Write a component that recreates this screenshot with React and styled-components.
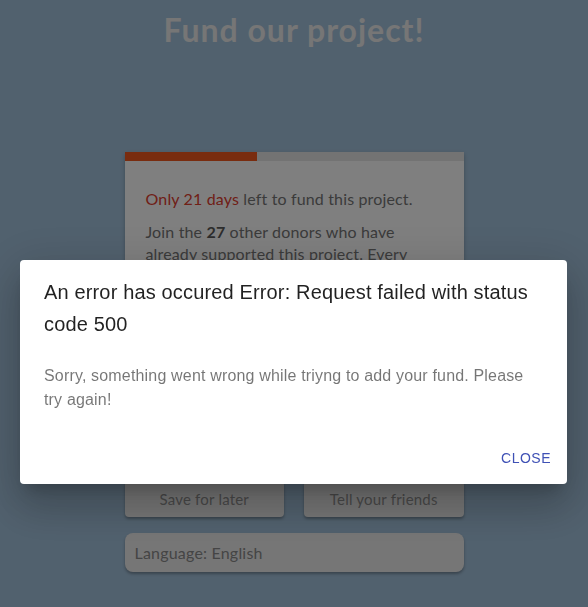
import React from "react";
import styled, { createGlobalStyle } from "styled-components";

const GlobalStyle = createGlobalStyle`
  html, body {
    margin: 0;
    padding: 0;
    background: #a3c2dc;
    height: 100%;
    overflow: hidden;
  }
`;

const Page = styled.div`
  display: flex;
  flex-direction: column;
  align-items: center;
  min-height: 607px;
  font-family: Lato, "Open Sans", sans-serif;
`;

const Title = styled.h1`
  margin: 9px 0 0;
  font-size: 32px;
  line-height: 42px;
  font-weight: 700;
  letter-spacing: 1px;
  color: #ececec;
`;

const Card = styled.div`
  margin-top: 101px;
  width: 339px;
  height: 313px;
  background: #fff;
  box-shadow: 0 2px 4px rgba(0, 0, 0, 0.25);
  overflow: hidden;
`;

const Progress = styled.div`
  height: 9px;
  background: #e6e6e6;
`;

const ProgressFill = styled.div`
  height: 100%;
  background: #f2581f;
`;

const CardBody = styled.div`
  padding: 27px 21px 20px;
  color: #767676;
  font-size: 16px;
  line-height: 22px;
  letter-spacing: 0.15px;
`;

const Para = styled.p`
  margin: 0 0 11px;
`;

const Highlight = styled.span`
  color: #e0402f;
`;

const Strong = styled.strong`
  color: #5a5a5a;
`;

const GiveRow = styled.div`
  display: flex;
  gap: 10px;
  margin-top: 20px;
`;

const AmountInput = styled.div`
  flex: 1;
  height: 40px;
  border: 1px solid #ccc;
  border-radius: 4px;
  padding: 0 10px;
  display: flex;
  align-items: center;
  color: #555;
`;

const GiveButton = styled.div`
  width: 110px;
  height: 42px;
  border-radius: 4px;
  background: #20b573;
  color: #fff;
  display: flex;
  align-items: center;
  justify-content: center;
  font-weight: 700;
`;

const ButtonRow = styled.div`
  display: flex;
  gap: 20px;
  width: 339px;
  margin-top: 16px;
`;

const SoftButton = styled.div`
  flex: 1;
  height: 36px;
  border-radius: 4px;
  background: #ededed;
  box-shadow: 0 2px 3px rgba(0, 0, 0, 0.3);
  display: flex;
  align-items: center;
  justify-content: center;
  color: #929292;
  font-size: 15px;
  letter-spacing: 0.2px;
`;

const LanguageSelect = styled.div`
  width: 339px;
  height: 39px;
  margin-top: 16px;
  box-sizing: border-box;
  border-radius: 8px;
  background: #ededed;
  box-shadow: 0 2px 3px rgba(0, 0, 0, 0.3);
  display: flex;
  align-items: center;
  padding-left: 10px;
  color: #8a8a8a;
  font-size: 16px;
  letter-spacing: 0.2px;
`;

const Backdrop = styled.div`
  position: fixed;
  inset: 0;
  background: rgba(0, 0, 0, 0.5);
`;

const Dialog = styled.div`
  position: absolute;
  top: 260px;
  left: 20px;
  right: 21px;
  background: #fff;
  border-radius: 4px;
  box-shadow: 0 11px 15px -7px rgba(0, 0, 0, 0.2),
    0 24px 38px 3px rgba(0, 0, 0, 0.14), 0 9px 46px 8px rgba(0, 0, 0, 0.12);
  font-family: "Liberation Sans", Arial, sans-serif;
  display: flex;
  flex-direction: column;
`;

const DialogTitle = styled.h2`
  margin: 0;
  padding: 16px 24px;
  font-size: 20px;
  line-height: 32px;
  font-weight: 400;
  letter-spacing: 0.15px;
  color: rgba(0, 0, 0, 0.87);
`;

const DialogContent = styled.div`
  padding: 8px 24px;
`;

const DialogText = styled.p`
  margin: 0 0 12px;
  font-size: 16px;
  line-height: 24px;
  letter-spacing: 0.17px;
  color: rgba(0, 0, 0, 0.54);
`;

const DialogActions = styled.div`
  display: flex;
  justify-content: flex-end;
  padding: 8px;
`;

const TextButton = styled.button`
  border: 0;
  background: transparent;
  font-family: inherit;
  font-size: 14px;
  font-weight: 500;
  letter-spacing: 0.5px;
  color: #3f51b5;
  padding: 6px 8px;
  height: 36px;
  min-width: 64px;
  cursor: pointer;
`;

export default function App() {
  const daysLeft = 21;
  const donors = 27;
  const progress = 39;

  return (
    <>
      <GlobalStyle />
      <Page>
        <Title>Fund our project!</Title>
        <Card>
          <Progress>
            <ProgressFill style={{ width: `${progress}%` }} />
          </Progress>
          <CardBody>
            <Para>
              <Highlight>Only {daysLeft} days</Highlight> left to fund this
              project.
            </Para>
            <Para>
              Join the <Strong>{donors}</Strong> other donors who have already
              supported this project. Every dollar helps.
            </Para>
            <GiveRow>
              <AmountInput>$ 50</AmountInput>
              <GiveButton>Give Now</GiveButton>
            </GiveRow>
          </CardBody>
        </Card>
        <ButtonRow>
          <SoftButton>Save for later</SoftButton>
          <SoftButton>Tell your friends</SoftButton>
        </ButtonRow>
        <LanguageSelect>Language: English</LanguageSelect>
      </Page>
      <Backdrop>
        <Dialog>
          <DialogTitle>
            An error has occured Error: Request failed with status code 500
          </DialogTitle>
          <DialogContent>
            <DialogText>
              Sorry, something went wrong while triyng to add your fund. Please
              try again!
            </DialogText>
          </DialogContent>
          <DialogActions>
            <TextButton>CLOSE</TextButton>
          </DialogActions>
        </Dialog>
      </Backdrop>
    </>
  );
}
